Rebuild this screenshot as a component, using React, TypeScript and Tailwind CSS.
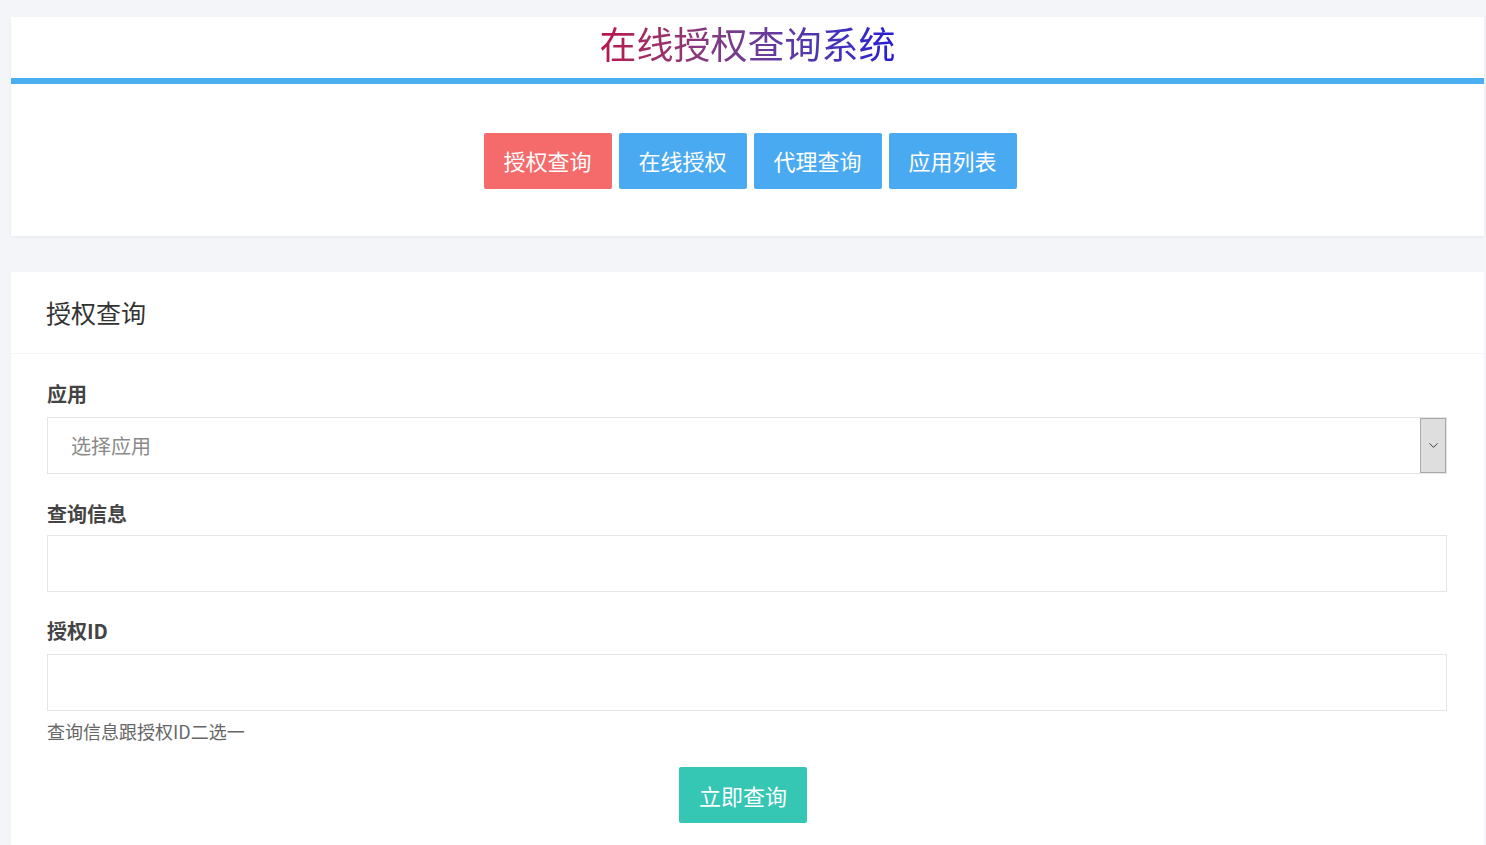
import { ChevronDown } from "lucide-react";

const font = {
  fontFamily: '"Noto Sans CJK SC", "Noto Sans", sans-serif',
};

const tabs = [
  { label: "授权查询", active: true },
  { label: "在线授权", active: false },
  { label: "代理查询", active: false },
  { label: "应用列表", active: false },
];

export default function App() {
  return (
    <div
      className="min-h-[845px] bg-[#f3f5f8] pt-[17px] pl-[11px] pr-[2px]"
      style={font}
    >
      {/* header card */}
      <div className="bg-white shadow-[0_1px_3px_rgba(0,0,0,0.06)]">
        <div className="flex h-[61px] items-center justify-center pb-[9px]">
          <h1 className="bg-gradient-to-r from-[#b8104a] to-[#2418d4] bg-clip-text text-[37px] leading-none text-transparent">
            在线授权查询系统
          </h1>
        </div>
        <div className="h-[6px] bg-[#4aaef0]" />
        <div className="flex h-[152px] items-center justify-center gap-[7px] pl-[5px] pt-[1px]">
          {tabs.map((t) => (
            <button
              key={t.label}
              className={`h-[56px] w-[128px] rounded-[2px] text-[22px] text-white ${
                t.active ? "bg-[#f56a6a]" : "bg-[#4aaaf1]"
              }`}
            >
              {t.label}
            </button>
          ))}
        </div>
      </div>

      {/* query card */}
      <div className="mt-[36px] bg-white">
        <div className="flex h-[82px] items-center border-b border-[#f5f5f5] px-[35px]">
          <h2 className="text-[25px] text-[#333]">授权查询</h2>
        </div>
        <div className="px-[36px] pr-[37px] pt-[25px] pb-[40px]">
          <label className="block text-[20px] font-bold leading-[30px] text-[#444]">
            应用
          </label>
          <div className="mt-[8px] flex h-[57px] border border-[#e5e5e5]">
            <div className="flex flex-1 items-center pl-[23px] text-[20px] text-[#8a8a8a]">
              选择应用
            </div>
            <div className="flex w-[26px] items-center justify-center border border-[#a9a9a9] bg-[#dedede]">
              <ChevronDown size={15} strokeWidth={1.5} className="text-[#333]" />
            </div>
          </div>

          <label className="mt-[25px] block text-[20px] font-bold leading-[30px] text-[#444]">
            查询信息
          </label>
          <div className="mt-[6px] h-[57px] border border-[#e5e5e5]" />

          <label className="mt-[24px] block text-[20px] font-bold leading-[30px] text-[#444]">
            授权ID
          </label>
          <div className="mt-[8px] h-[57px] border border-[#e5e5e5]" />

          <p className="mt-[7px] text-[18px] leading-[26px] text-[#666]">
            查询信息跟授权ID二选一
          </p>

          <div className="mt-[23px] flex justify-center pr-[8px]">
            <button className="h-[56px] w-[128px] rounded-[2px] bg-[#35c6b4] text-[22px] text-white">
              立即查询
            </button>
          </div>
        </div>
      </div>
    </div>
  );
}
